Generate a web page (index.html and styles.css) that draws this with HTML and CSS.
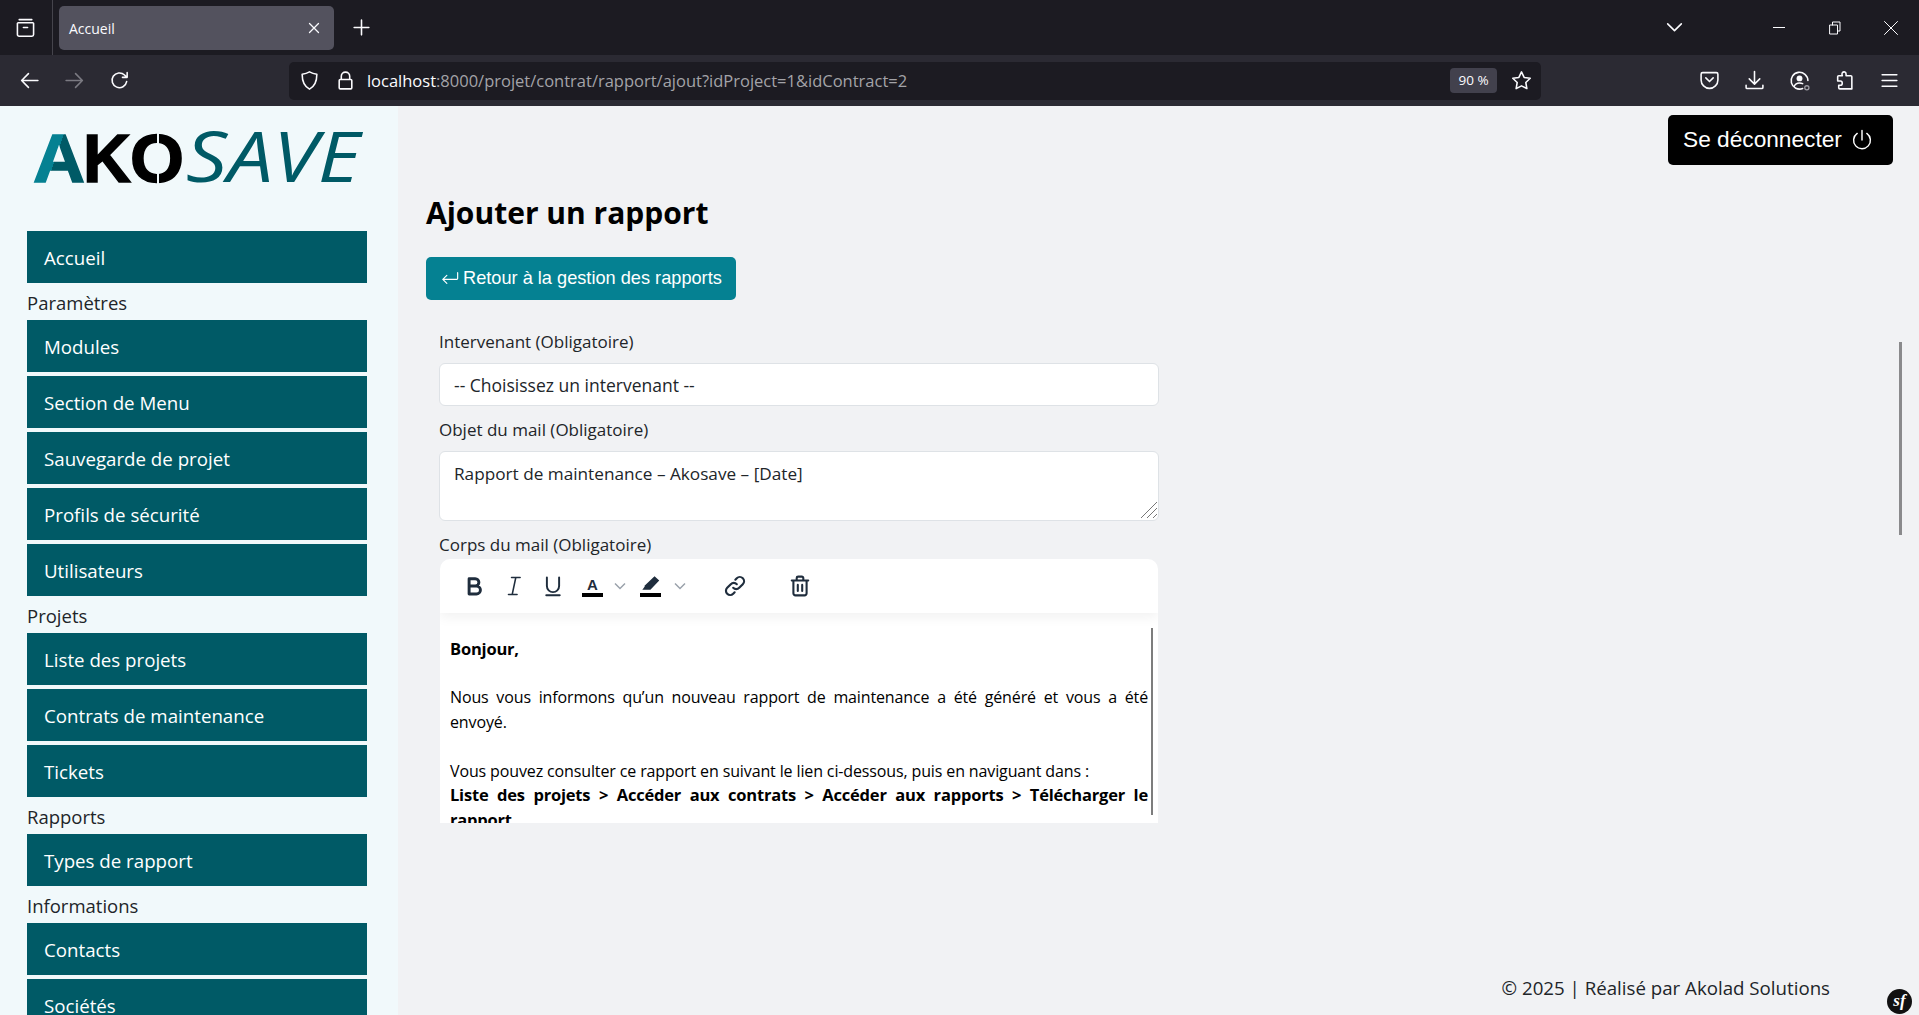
FILE: index.html
```html
<!DOCTYPE html>
<html lang="fr">
<head>
    <meta charset="UTF-8">
    <title>Accueil</title>
    <link rel="stylesheet" href="styles.css">
</head>
<body>

<div class="tabstrip">
    <div class="tabs-btn">
        <svg class="ico" viewBox="0 0 20 20"><path d="M4 2.500h12M3 5.500h14a.7.7 0 0 1 .7.7v10.500a1.600 1.600 0 0 1-1.600 1.600H3.900a1.600 1.600 0 0 1-1.600-1.600V6.200a.7.7 0 0 1 .7-.7zM8 10h4"/></svg>
    </div>
    <div class="tab">
        <span class="tab-title">Accueil</span>
        <svg class="ico-sm" viewBox="0 0 12 12"><path d="M1.500 1.500l9 9M10.500 1.500l-9 9"/></svg>
    </div>
    <div class="newtab">
        <svg class="ico" viewBox="0 0 20 20"><path d="M10 3v14M3 10h14"/></svg>
    </div>
    <div class="spacer"></div>
    <div class="win-chevron">
        <svg class="ico" viewBox="0 0 20 20"><path d="M3.500 6.500l6.500 6.500 6.500-6.500"/></svg>
    </div>
    <div class="win-btn">
        <svg class="ico-sm" viewBox="0 0 12 14"><path d="M0 6.500h12"/></svg>
    </div>
    <div class="win-btn">
        <svg class="ico-sm" viewBox="0 0 12 14"><path d="M1 4h7.500v9H1zM3.500 4V1H11v9H8.500"/></svg>
    </div>
    <div class="win-btn">
        <svg class="ico" viewBox="0 0 14 14"><path d="M.5.5l13 13M13.500.5l-13 13"/></svg>
    </div>
</div>

<div class="navbar">
    <div class="nav-btn">
        <svg class="ico" viewBox="0 0 20 20"><path d="M18 10H2.500M9 3.500L2.500 10 9 16.500"/></svg>
    </div>
    <div class="nav-btn nav-btn-off">
        <svg class="ico" viewBox="0 0 20 20"><path d="M2 10h15.500M11 3.500l6.500 6.500-6.500 6.500"/></svg>
    </div>
    <div class="nav-btn">
        <svg class="ico" viewBox="0 0 20 20"><path d="M16.800 11a7 7 0 1 1-2-6.200L17 7M17.300 2.500V7h-4.500"/></svg>
    </div>
    <div class="urlbar">
        <svg class="ico url-shield" viewBox="0 0 20 20"><path d="M10 1.800c2.500 1.500 4.800 2 7 2.200 0 6-1 11-7 14.200C4 15 3 10 3 4c2.200-.2 4.500-.7 7-2.200z"/></svg>
        <svg class="ico url-lock" viewBox="0 0 20 20"><path d="M6 9V6a4 4 0 0 1 8 0v3M5 9h10a1 1 0 0 1 1 1v7a1 1 0 0 1-1 1H5a1 1 0 0 1-1-1v-7a1 1 0 0 1 1-1z"/></svg>
        <span class="url-text"><span class="url-host">localhost</span>:8000/projet/contrat/rapport/ajout?idProject=1&amp;idContract=2</span>
        <span class="zoom-pill">90 %</span>
        <svg class="ico url-star" viewBox="0 0 20 20"><path d="M10 1.800l2.500 5.300 5.800.8-4.200 4 1 5.800L10 15.100l-5.100 2.600 1-5.800-4.200-4 5.800-.8z"/></svg>
    </div>
    <div class="nav-btn">
        <svg class="ico" viewBox="0 0 20 20"><path d="M3.500 2.500h13A1.500 1.500 0 0 1 18 4v5.500a8 8 0 0 1-16 0V4a1.500 1.500 0 0 1 1.500-1.500zM6.500 7.500L10 11l3.500-3.500"/></svg>
    </div>
    <div class="nav-btn">
        <svg class="ico" viewBox="0 0 20 20"><path d="M10 1.500v11.500M5 8.500l5 5 5-5M2 14.500v2.200a1 1 0 0 0 1 1h14a1 1 0 0 0 1-1v-2.200"/></svg>
    </div>
    <div class="nav-btn">
        <svg class="ico" viewBox="0 0 20 20"><path d="M13 17.600A8 8 0 1 1 18 10M5 15.500c1-2.500 3-3.200 5-3.200 1 0 2 .2 3 .7"/><circle class="ico-fill" cx="10" cy="8" r="2.800"/><circle class="ico-dot" cx="17" cy="17" r="2"/></svg>
    </div>
    <div class="nav-btn">
        <svg class="ico" viewBox="0 0 20 20"><path d="M8 2.500c1.500-1.500 3.500-.5 3.500 1.500v1.500H16a1 1 0 0 1 1 1V18H5.500a1 1 0 0 1-1-1v-2.500H6c2.500 0 2.500-4 0-4H3.500V6.500a1 1 0 0 1 1-1H8c-.5-1-.8-2 0-3z"/></svg>
    </div>
    <div class="nav-btn">
        <svg class="ico" viewBox="0 0 20 20"><path d="M3 4.500h14M3 10h14M3 15.500h14"/></svg>
    </div>
</div>

<div class="page">
    <aside class="sidebar">
        <div class="logo">
            <svg viewBox="0 0 332 95" width="332" height="95">
                <defs>
                    <linearGradient id="logo-a" gradientUnits="userSpaceOnUse" x1="23" y1="49" x2="73" y2="66">
                        <stop offset="0" stop-color="#058192"/>
                        <stop offset="0" stop-color="#005a66"/>
                    </linearGradient>
                </defs>
                <text x="0" y="74" class="logo-a" textLength="52" lengthAdjust="spacingAndGlyphs">A</text>
                <text x="50" y="74" class="logo-ako" textLength="48" lengthAdjust="spacingAndGlyphs">K</text>
                <text x="97" y="74" class="logo-ako" textLength="54" lengthAdjust="spacingAndGlyphs">O</text>
                <rect x="124" y="19" width="2" height="60" fill="#f1f9fb"/>
                <text x="153" y="74" class="logo-save" textLength="174" lengthAdjust="spacingAndGlyphs">SAVE</text>
            </svg>
        </div>
        <nav class="menu">
            <a class="menu-item">Accueil</a>
            <div class="menu-title">Paramètres</div>
            <a class="menu-item">Modules</a>
            <a class="menu-item">Section de Menu</a>
            <a class="menu-item">Sauvegarde de projet</a>
            <a class="menu-item">Profils de sécurité</a>
            <a class="menu-item">Utilisateurs</a>
            <div class="menu-title">Projets</div>
            <a class="menu-item">Liste des projets</a>
            <a class="menu-item">Contrats de maintenance</a>
            <a class="menu-item">Tickets</a>
            <div class="menu-title">Rapports</div>
            <a class="menu-item">Types de rapport</a>
            <div class="menu-title">Informations</div>
            <a class="menu-item">Contacts</a>
            <a class="menu-item">Sociétés</a>
        </nav>
    </aside>

    <main class="content">
        <div class="topbar">
            <button class="logout"><span class="logout-text">Se déconnecter</span>
                <svg class="logout-ico" viewBox="0 0 20 20"><path d="M10 2v8M6 4.500a7 7 0 1 0 8 0"/></svg>
            </button>
        </div>

        <h1>Ajouter un rapport</h1>
        <a class="back-btn">
            <svg class="back-ico" viewBox="0 0 20 16"><path d="M18.500 1.500v6.500a1 1 0 0 1-1 1H2M6.500 4.500L2 9l4.500 4.500"/></svg>
            Retour à la gestion des rapports
        </a>

        <form class="report-form">
            <label class="field-label">Intervenant (Obligatoire)</label>
            <select class="field-select">
                <option>-- Choisissez un intervenant --</option>
            </select>

            <label class="field-label label-objet">Objet du mail (Obligatoire)</label>
            <div class="area-wrap">
                <textarea class="field-area">Rapport de maintenance – Akosave – [Date]</textarea>
                <svg class="area-grip" viewBox="0 0 18 18"><path d="M1 17L17 1M7 17L17 7M13 17l4-4"/></svg>
            </div>

            <label class="field-label label-corps">Corps du mail (Obligatoire)</label>
            <div class="editor">
                <div class="editor-bar">
                    <svg class="tool tool-b" viewBox="0 0 18 18"><path d="M5 3h5a3 3 0 0 1 0 6H5zM5 9h6a3.200 3.200 0 0 1 0 6.500H5z"/></svg>
                    <svg class="tool tool-i" viewBox="0 0 18 18"><path d="M7 2h7M4.500 16h7M10.500 2l-3 14"/></svg>
                    <svg class="tool tool-u" viewBox="0 0 18 18"><path d="M4 2v7a5 5 0 0 0 10 0V2M3.500 16.500h11"/></svg>
                    <span class="tool-color">
                        <span class="tool-color-a">A</span>
                        <span class="tool-color-line"></span>
                    </span>
                    <svg class="tool-caret" viewBox="0 0 14 14"><path d="M2 4.500l5 5 5-5"/></svg>
                    <span class="tool-color tool-mark">
                        <svg class="tool-pen" viewBox="2 0 17 14"><path d="M13.500 0l4 3.500-7.500 8H5.500l-.5-3.500zM3.500 11l1.500-2 2.500 2.500H3z"/></svg>
                        <span class="tool-color-line"></span>
                    </span>
                    <svg class="tool-caret tool-caret-2" viewBox="0 0 14 14"><path d="M2 4.500l5 5 5-5"/></svg>
                    <svg class="tool tool-link" viewBox="0 0 20 20"><path d="M8.500 11.500a3.500 3.500 0 0 0 5 0l3-3a3.500 3.500 0 0 0-5-5l-1.200 1.200M11.500 8.500a3.500 3.500 0 0 0-5 0l-3 3a3.500 3.500 0 0 0 5 5l1.200-1.200"/></svg>
                    <svg class="tool tool-trash" viewBox="0 0 18 20"><path d="M1.500 5h15M6 5V2.800A1.300 1.300 0 0 1 7.300 1.500h3.400A1.300 1.300 0 0 1 12 2.800V5M3 5v11.700A1.800 1.800 0 0 0 4.800 18.500h8.400a1.800 1.800 0 0 0 1.800-1.800V5M7 9v5.500M11 9v5.500"/></svg>
                </div>
                <div class="editor-body">
                    <p><strong>Bonjour,</strong></p>
                    <p>Nous vous informons qu’un nouveau rapport de maintenance a été généré et vous a été envoyé.</p>
                    <p>Vous pouvez consulter ce rapport en suivant le lien ci-dessous, puis en naviguant dans :<br>
                    <strong>Liste des projets &gt; Accéder aux contrats &gt; Accéder aux rapports &gt; Télécharger le rapport</strong></p>
                </div>
                <div class="editor-thumb"></div>
            </div>
        </form>

        <footer class="footer">© 2025 | Réalisé par Akolad Solutions</footer>
    </main>

    <div class="page-thumb"></div>
    <div class="sf-badge">sf</div>
</div>

</body>
</html>
```

FILE: styles.css
```css
* {
    box-sizing: border-box;
}
html, body {
    margin: 0;
    height: 100%;
    overflow: hidden;
}
body {
    display: flex;
    flex-direction: column;
    font-family: "Open Sans", "Noto Sans", sans-serif;
    background-color: #1c1b22;
}

/* icons of the browser frame */
.ico, .ico-sm {
    width: 21px;
    height: 21px;
    fill: none;
    stroke: #fbfbfe;
    stroke-width: 1.5;
    stroke-linecap: round;
    stroke-linejoin: round;
    display: block;
}
.ico-sm {
    width: 12px;
    height: 12px;
    stroke-width: 1.3;
}
.ico-fill {
    fill: #fbfbfe;
    stroke: none;
}
.ico-dot {
    fill: #2b2a33;
    stroke: #a0a0a8;
    stroke-width: 1.2;
}

.tabstrip {
    height: 55px;
    flex: none;
    display: flex;
    align-items: center;
    background-color: #1c1b22;
}
.tabs-btn {
    width: 53px;
    height: 55px;
    padding-right: 2px;
    display: flex;
    align-items: center;
    justify-content: center;
    border-right: 1px solid #45444c;
}
.tab {
    width: 275px;
    height: 44px;
    margin-left: 6px;
    padding: 1px 14px 0 10px;
    display: flex;
    align-items: center;
    justify-content: space-between;
    background-color: #53525e;
    border-radius: 5px;
    color: #fbfbfe;
}
.tab-title {
    font-size: 14px;
}
.newtab {
    width: 54px;
    display: flex;
    justify-content: center;
}
.spacer {
    flex: 1;
}
.win-chevron {
    width: 21px;
    margin-right: 66px;
}
.win-btn {
    width: 56px;
    display: flex;
    justify-content: center;
}
.win-btn .ico {
    width: 14px;
    height: 14px;
    stroke-width: 1;
}
.win-btn .ico-sm {
    stroke-width: 1;
    height: 14px;
}

.navbar {
    height: 51px;
    flex: none;
    padding: 0 7px 0 7px;
    display: flex;
    align-items: center;
    background-color: #2b2a33;
}
.nav-btn {
    width: 45px;
    display: flex;
    justify-content: center;
}
.nav-btn-off .ico {
    stroke: #7b7a82;
}
.urlbar {
    width: 1253px;
    height: 38px;
    margin-left: 147px;
    margin-right: 146px;
    padding: 0 9px 0 10px;
    display: flex;
    align-items: center;
    background-color: #1c1b22;
    border-radius: 5px;
    color: #a3a3a8;
    font-size: 16.5px;
}
.url-lock {
    margin-left: 15px;
}
.url-text {
    margin-left: 11px;
    flex: 1;
}
.url-host {
    color: #fbfbfe;
}
.zoom-pill {
    width: 47px;
    height: 25px;
    line-height: 25px;
    text-align: center;
    background-color: #42414d;
    border-radius: 4px;
    color: #fbfbfe;
    font-size: 13.5px;
}
.url-star {
    margin-left: 14px;
}

.page {
    flex: 1;
    min-height: 0;
    display: flex;
    position: relative;
}

.sidebar {
    width: 398px;
    flex: none;
    padding: 2px 31px 0 27px;
    overflow: hidden;
    background-color: #f1f9fb;
}
.logo {
    height: 95px;
    margin-left: 6px;
    margin-bottom: 28px;
}
.logo svg {
    display: block;
}
.logo-a, .logo-ako {
    font-family: "Liberation Sans", sans-serif;
    font-weight: 700;
    font-size: 69px;
    stroke-width: 1.5;
}
.logo-a {
    fill: url(#logo-a);
    stroke: url(#logo-a);
}
.logo-ako {
    fill: #000;
    stroke: #000;
}
.logo-save {
    font-family: "Open Sans", sans-serif;
    font-style: italic;
    font-size: 69px;
    fill: #005a66;
}
.menu-item {
    display: block;
    height: 52px;
    line-height: 53px;
    padding-left: 17px;
    margin-bottom: 4px;
    background-color: #005a66;
    color: #fff;
    font-size: 18.7px;
}
.menu-title {
    height: 37px;
    line-height: 39px;
    margin-top: -4px;
    color: #212529;
    font-size: 18.5px;
}

.content {
    flex: 1;
    padding: 9px 26px 0 28px;
    display: flex;
    flex-direction: column;
    min-width: 0;
    background-color: #f1f2f4;
}
.topbar {
    display: flex;
    justify-content: flex-end;
}
.logout {
    height: 50px;
    width: 225px;
    padding: 0 19px 0 15px;
    display: flex;
    align-items: center;
    justify-content: space-between;
    background-color: #000;
    border: 0;
    border-radius: 5px;
    color: #fff;
    font-family: "Liberation Sans", sans-serif;
    font-size: 22.7px;
}
.logout-text {
    margin-top: -2px;
}
.logout-ico {
    width: 24px;
    height: 24px;
    fill: none;
    stroke: #fff;
    stroke-width: 1.2;
    stroke-linecap: round;
}

h1 {
    margin: 24px 0 0;
    height: 47px;
    line-height: 47px;
    font-size: 30px;
    font-weight: 700;
    color: #000;
}
.back-btn {
    width: 310px;
    height: 43px;
    margin-top: 21px;
    padding-left: 15px;
    display: flex;
    align-items: center;
    gap: 4px;
    background-color: #058192;
    border-radius: 5px;
    color: #fff;
    font-family: "Liberation Sans", sans-serif;
    font-size: 18.2px;
}
.back-ico {
    width: 18px;
    height: 15px;
    fill: none;
    stroke: #fff;
    stroke-width: 1.3;
    stroke-linecap: round;
    stroke-linejoin: round;
}

.report-form {
    width: 720px;
    margin-left: 13px;
    margin-top: 29px;
    display: flex;
    flex-direction: column;
}
.field-label {
    height: 25px;
    line-height: 25px;
    margin-bottom: 9px;
    font-size: 17px;
    color: #212529;
}
.label-objet {
    margin-top: 11px;
}
.label-corps {
    margin-top: 11px;
    margin-bottom: 2px;
}
.field-select, .field-area {
    width: 100%;
    padding: 0 14px;
    background-color: #fff;
    border: 1px solid #dee2e6;
    border-radius: 6px;
    color: #212529;
    font-family: "Open Sans", sans-serif;
}
.field-select {
    height: 43px;
    appearance: none;
    font-size: 17.5px;
}
.area-wrap {
    position: relative;
}
.field-area {
    height: 70px;
    padding-top: 10px;
    line-height: 24px;
    display: block;
    resize: none;
    font-size: 17.2px;
}
.area-grip {
    width: 18px;
    height: 18px;
    fill: none;
    stroke: #777;
    stroke-width: 1;
    position: absolute;
    right: 1px;
    bottom: 2px;
}

.editor {
    margin-left: 1px;
    width: 718px;
    height: 264px;
    background-color: #fff;
    border-radius: 10px 10px 0 0;
    position: relative;
    overflow: hidden;
}
.editor-bar {
    height: 54px;
    padding-left: 23px;
    display: flex;
    align-items: center;
    box-shadow: 0 4px 12px rgba(0, 0, 0, 0.06);
    position: relative;
}
.tool {
    width: 20px;
    height: 20px;
    flex: none;
    fill: none;
    stroke: #1f2d3d;
    stroke-width: 1.8;
    stroke-linecap: round;
    stroke-linejoin: round;
}
.tool-b {
    width: 22px;
    height: 22px;
    stroke-width: 2.4;
}
.tool-i {
    width: 22px;
    height: 22px;
    margin-left: 18px;
    stroke-width: 1.3;
}
.tool-u {
    width: 22px;
    height: 22px;
    margin-left: 17px;
    stroke-width: 1.6;
}
.tool-color {
    width: 21px;
    height: 22px;
    margin-left: 18px;
    display: flex;
    flex-direction: column;
    align-items: center;
    justify-content: flex-end;
}
.tool-color-a {
    font-family: "Liberation Sans", sans-serif;
    font-weight: 700;
    font-size: 15px;
    line-height: 16px;
    color: #1f2d3d;
}
.tool-color-line {
    width: 21px;
    height: 4px;
    flex: none;
    background-color: #000;
}
.tool-caret {
    width: 14px;
    height: 14px;
    margin-left: 10px;
    fill: none;
    stroke: #9aa2ab;
    stroke-width: 1.5;
}
.tool-caret-2 {
    margin-left: 12px;
}
.tool-mark {
    margin-left: 13px;
}
.tool-pen {
    width: 20px;
    height: 17px;
    flex: none;
    fill: #1f2d3d;
}
.tool-link {
    width: 24px;
    height: 24px;
    margin-left: 36px;
}
.tool-trash {
    width: 20px;
    height: 22px;
    margin-left: 43px;
    stroke-width: 1.9;
}
.editor-body {
    padding: 24px 10px 0 10px;
    font-size: 16px;
    line-height: 24.5px;
    color: #000;
    text-align: justify;
    letter-spacing: -0.13px;
}
.editor-body strong {
    font-size: 16.5px;
    letter-spacing: -0.2px;
}
.editor-body p {
    margin: 0 0 24.5px;
}
.editor-body p:first-child {
    margin-bottom: 23.5px;
}
.editor-thumb {
    width: 2px;
    height: 187px;
    background-color: #7d7d7d;
    position: absolute;
    right: 5px;
    top: 69px;
}

.footer {
    margin-top: auto;
    margin-bottom: 15px;
    padding-right: 63px;
    text-align: right;
    font-size: 18.7px;
    color: #212529;
}

.page-thumb {
    width: 3px;
    height: 193px;
    background-color: #8a8a8c;
    position: absolute;
    right: 17px;
    top: 236px;
}
.sf-badge {
    width: 25px;
    height: 25px;
    line-height: 23px;
    text-align: center;
    background-color: #111;
    border-radius: 50%;
    color: #fff;
    font-family: "Liberation Serif", serif;
    font-style: italic;
    font-weight: 700;
    font-size: 17px;
    position: absolute;
    right: 7px;
    bottom: 1px;
}
```
